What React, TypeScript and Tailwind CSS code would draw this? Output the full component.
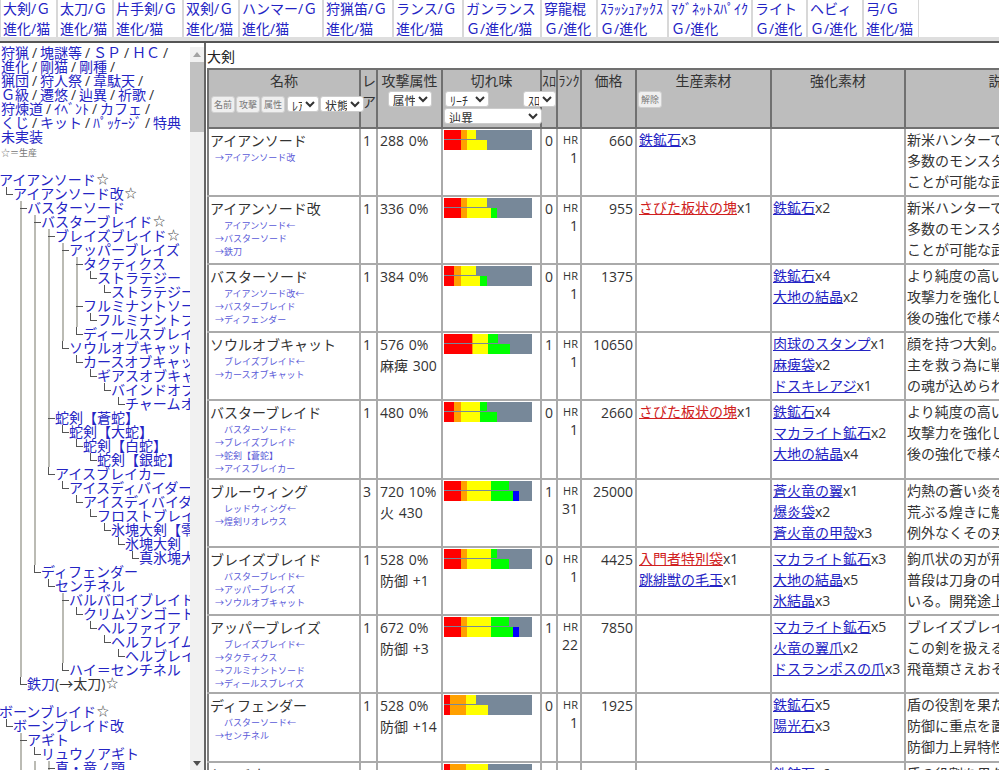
import React from "react";

const navItems: [string, string, number][] = [
  ["大剣/Ｇ", "進化/猫", 57], ["太刀/Ｇ", "進化/猫", 56], ["片手剣/Ｇ", "進化/猫", 70], ["双剣/Ｇ", "進化/猫", 56],
  ["ハンマー/Ｇ", "進化/猫", 84], ["狩猟笛/Ｇ", "進化/猫", 70], ["ランス/Ｇ", "進化/猫", 70], ["ガンランス", "Ｇ/進化/猫", 78],
  ["穿龍棍", "Ｇ/進化", 56], ["ｽﾗｯｼｭｱｯｸｽ", "Ｇ/進化", 71], ["ﾏｸﾞﾈｯﾄｽﾊﾟｲｸ", "Ｇ/進化", 84], ["ライト", "Ｇ/進化", 55],
  ["ヘビィ", "Ｇ/進化", 56], ["弓/Ｇ", "進化/猫", 56],
];

const sideLines: string[][] = [
  ["狩猟", "塊謎等", "ＳＰ", "ＨＣ", ""],
  ["進化", "剛猫", "剛種", ""],
  ["猟団", "狩人祭", "韋駄天", ""],
  ["Ｇ級", "遷悠", "辿異", "祈歌", ""],
  ["狩煉道", "ｲﾍﾞﾝﾄ", "カフェ", ""],
  ["くじ", "キット", "ﾊﾟｯｹｰｼﾞ", "特典"],
  ["未実装"],
];

// level, text, star, guides (levels whose vertical line passes this row)
const tree: [number, string, boolean, number[]][] = [
  [0, "アイアンソード", true, []],
  [1, "アイアンソード改", true, []],
  [2, "バスターソード", false, []],
  [3, "バスターブレイド", true, [2]],
  [4, "ブレイズブレイド", true, [2, 3]],
  [5, "アッパーブレイズ", false, [2, 3, 4]],
  [6, "タクティクス", false, [2, 3, 4, 5]],
  [7, "ストラテジー", false, [2, 3, 4, 5, 6]],
  [8, "ストラテジーアーク", false, [2, 3, 4, 5, 6]],
  [6, "フルミナントソード", false, [2, 3, 4, 5]],
  [7, "フルミナントブレイド", false, [2, 3, 4, 5, 6]],
  [6, "ディールスブレイズ", false, [2, 3, 4, 5]],
  [5, "ソウルオブキャット", false, [2, 3, 4]],
  [6, "カースオブキャット", false, [2, 3, 4]],
  [7, "ギアスオブキャット", false, [2, 3, 4]],
  [8, "バインドオブキャット", false, [2, 3, 4]],
  [9, "チャームオブキャット", false, [2, 3, 4]],
  [4, "蛇剣【蒼蛇】", false, [2, 3]],
  [5, "蛇剣【大蛇】", false, [2, 3, 4]],
  [6, "蛇剣【白蛇】", false, [2, 3, 4]],
  [7, "蛇剣【銀蛇】", false, [2, 3, 4]],
  [4, "アイスブレイカー", false, [2, 3]],
  [5, "アイスディバイダー", false, [2, 3]],
  [6, "アイスディバイダー改", false, [2, 3]],
  [7, "フロストブレイド", false, [2, 3]],
  [8, "氷塊大剣【零】", false, [2, 3]],
  [9, "氷塊大剣【真】", false, [2, 3]],
  [10, "真氷塊大剣", false, [2, 3]],
  [3, "ディフェンダー", false, [2]],
  [4, "センチネル", false, [2]],
  [5, "バルバロイブレイド", false, [2]],
  [6, "クリムゾンゴート", false, [2, 5]],
  [7, "ヘルファイア", false, [2, 5]],
  [8, "ヘルフレイム", false, [2, 5]],
  [9, "ヘルブレイズ", false, [2, 5]],
  [5, "ハイ＝センチネル", false, [2]],
  [2, "鉄刀", true, []],
];

const tree2: [number, string, boolean, number[]][] = [
  [0, "ボーンブレイド", true, []],
  [1, "ボーンブレイド改", false, []],
  [2, "アギト", false, []],
  [3, "リュウノアギト", false, [2]],
  [4, "真・竜ノ顎", false, [2, 3]],
];

const teeLevels = new Set([
  "バスターソード", "バスターブレイド", "ブレイズブレイド", "アッパーブレイズ", "タクティクス", "フルミナントソード",
  "蛇剣【蒼蛇】", "バルバロイブレイド", "アギト", "真・竜ノ顎",
]);

function TreeRow({ row }: { row: [number, string, boolean, number[]] }) {
  const [level, text, star, guides] = row;
  const isIron = text === "鉄刀";
  return (
    <div className="flex h-[14px] leading-[14px] whitespace-nowrap">
      {Array.from({ length: level }).map((_, i) => {
        const l = i + 1;
        const isConn = l === level;
        const pass = guides.includes(l);
        const tee = isConn && teeLevels.has(text);
        return (
          <span key={i} className="relative h-[14px] w-[14px] shrink-0">
            {pass && <span className="absolute bottom-0 left-[7px] top-0 w-[2px] bg-[#bbbbb4]" />}
            {isConn && (
              <>
                <span className={tee ? "absolute bottom-0 left-[7px] top-0 w-[2px] bg-[#bbbbb4]" : "absolute left-[7px] top-0 h-[8px] w-[1px] bg-[#555]"} />
                <span className="absolute left-[7px] top-[7px] h-[1px] w-[7px] bg-[#555]" />
              </>
            )}
          </span>
        );
      })}
      <span className="text-[#2424c4]">{text}</span>
      {isIron && <span className="text-[#333]">(→太刀)</span>}
      {star && <span className="ml-[1px] text-[12px] text-[#444]">☆</span>}
    </div>
  );
}

type Seg = [string, number];
const R = "#ff0000", O = "#ffa000", Y = "#ffff00", G = "#00ff00", B = "#0000ff";
const s = (r: number, o: number, y: number, g = 0, b = 0): Seg[] => [[R, r], [O, o], [Y, y], [G, g], [B, b]];

type Row = {
  h: string; name: string; subs: string[]; rare: string; atk: string; attr?: string;
  sharp: [Seg[], Seg[]]; slot: string; hr: string; price: string;
  make: [string, string, boolean][]; up: [string, string][]; desc: string[];
};

const rows: Row[] = [
  { h: "h-[68px]", name: "アイアンソード", subs: ["→アイアンソード改"], rare: "1", atk: "288 0%", sharp: [s(17, 6, 9), s(17, 6, 20)], slot: "0", hr: "1", price: "660",
    make: [["鉄鉱石", "x3", false]], up: [], desc: ["新米ハンターでも扱える大剣", "多数のモンスターに対して", "ことが可能な武器である"] },
  { h: "h-[68px]", name: "アイアンソード改", subs: ["　アイアンソード←", "→バスターソード", "→鉄刀"], rare: "1", atk: "336 0%", sharp: [s(17, 6, 20), s(17, 6, 24, 6)], slot: "0", hr: "1", price: "955",
    make: [["さびた板状の塊", "x1", true]], up: [["鉄鉱石", "x2"]], desc: ["新米ハンターでも扱える大剣", "多数のモンスターに対して", "ことが可能な武器である"] },
  { h: "h-[68px]", name: "バスターソード", subs: ["　アイアンソード改←", "→バスターブレイド", "→ディフェンダー"], rare: "1", atk: "384 0%", sharp: [s(10, 7, 15), s(10, 7, 19, 7)], slot: "0", hr: "1", price: "1375",
    make: [], up: [["鉄鉱石", "x4"], ["大地の結晶", "x2"]], desc: ["より純度の高い鉱石を用いて", "攻撃力を強化した大剣", "後の強化で様々な派生を"] },
  { h: "h-[68px]", name: "ソウルオブキャット", subs: ["　ブレイズブレイド←", "→カースオブキャット"], rare: "1", atk: "576 0%", attr: "麻痺 300", sharp: [s(28, 1, 15, 10), s(28, 1, 15, 22)], slot: "1", hr: "1", price: "10650",
    make: [], up: [["肉球のスタンプ", "x1"], ["麻痺袋", "x2"], ["ドスキレアジ", "x1"]], desc: ["顔を持つ大剣。", "主を救う為に戦う", "の魂が込められている"] },
  { h: "h-[79px]", name: "バスターブレイド", subs: ["　バスターソード←", "→ブレイズブレイド", "→蛇剣【蒼蛇】", "→アイスブレイカー"], rare: "1", atk: "480 0%", sharp: [s(10, 7, 19, 7), s(10, 7, 19, 17)], slot: "0", hr: "1", price: "2660",
    make: [["さびた板状の塊", "x1", true]], up: [["鉄鉱石", "x4"], ["マカライト鉱石", "x2"], ["大地の結晶", "x4"]], desc: ["より純度の高い鉱石を用いて", "攻撃力を強化した大剣", "後の強化で様々な派生を"] },
  { h: "h-[68px]", name: "ブルーウィング", subs: ["　レッドウィング←", "→煌剣リオレウス"], rare: "3", atk: "720 10%", attr: "火 430", sharp: [s(17, 6, 24, 18), s(17, 6, 24, 22, 6)], slot: "1", hr: "31", price: "25000",
    make: [], up: [["蒼火竜の翼", "x1"], ["爆炎袋", "x2"], ["蒼火竜の甲殻", "x3"]], desc: ["灼熱の蒼い炎を纏う大剣", "荒ぶる煌きに魅せられた者は", "例外なくその刃に倒れる"] },
  { h: "h-[68px]", name: "ブレイズブレイド", subs: ["　バスターブレイド←", "→アッパーブレイズ", "→ソウルオブキャット"], rare: "1", atk: "528 0%", attr: "防御 +1", sharp: [s(17, 6, 24, 6), s(17, 6, 24, 18)], slot: "0", hr: "1", price: "4425",
    make: [["入門者特別袋", "x1", true], ["跳緋獣の毛玉", "x1", false]], up: [["マカライト鉱石", "x3"], ["大地の結晶", "x5"], ["氷結晶", "x3"]], desc: ["鉤爪状の刃が飛び出す大剣", "普段は刀身の中に収められて", "いる。開発途上の武器である"] },
  { h: "h-[78px]", name: "アッパーブレイズ", subs: ["　ブレイズブレイド←", "→タクティクス", "→フルミナントソード", "→ディールスブレイズ"], rare: "1", atk: "672 0%", attr: "防御 +3", sharp: [s(17, 6, 24, 18), s(17, 6, 24, 22, 6)], slot: "1", hr: "22", price: "7850",
    make: [], up: [["マカライト鉱石", "x5"], ["火竜の翼爪", "x2"], ["ドスランポスの爪", "x3"]], desc: ["ブレイズブレイドの強化型", "この剣を扱える者ならば", "飛竜類さえおそれない"] },
  { h: "h-[69px]", name: "ディフェンダー", subs: ["　バスターソード←", "→センチネル"], rare: "1", atk: "528 0%", attr: "防御 +14", sharp: [s(6, 16, 10), s(6, 16, 22)], slot: "0", hr: "1", price: "1925",
    make: [], up: [["鉄鉱石", "x5"], ["陽光石", "x3"]], desc: ["盾の役割を果たす大剣", "防御に重点を置いた設計で", "防御力上昇特性を持つ"] },
  { h: "h-[68px]", name: "センチネル", subs: ["　ディフェンダー←"], rare: "1", atk: "576 0%", sharp: [s(6, 16, 22), s(6, 16, 24)], slot: "1", hr: "1", price: "2825",
    make: [], up: [["鉄鉱石", "x6"]], desc: ["盾の役割を果たす大剣"] },
];

function Btn({ children }: { children: React.ReactNode }) {
  return (
    <button className="h-[17px] w-[24px] shrink-0 rounded-[3px] border border-[#cfcfcf] bg-[#efefef] text-[9px] font-normal leading-[14px] text-[#777]">
      {children}
    </button>
  );
}

function Sel({ label, className }: { label: string; className: string }) {
  return (
    <select defaultValue={label} className={"shrink-0 rounded-[3px] border border-[#ccc] bg-white text-[12px] font-normal leading-[14px] text-[#333] " + className}>
      <option value={label}>{label}</option>
    </select>
  );
}

function Bar({ segs }: { segs: Seg[] }) {
  return (
    <div className="flex h-[10px]">
      {segs.filter((x) => x[1] > 0).map((x, i) => (
        <div key={i} className="h-full" style={{ width: x[1], backgroundColor: x[0] }} />
      ))}
    </div>
  );
}

function ScrollBar() {
  return (
    <div className="relative mt-[4px] flex w-[14px] shrink-0 flex-col bg-[#f1f1f1]">
      <div className="flex h-[15px] items-center justify-center">
        <svg width="8" height="5" viewBox="0 0 8 5"><path d="M4 0 L8 5 L0 5 Z" fill="#a3a3a3" /></svg>
      </div>
      <div className="h-[70px] bg-[#c1c1c1]" />
      <div className="flex-1" />
      <div className="flex h-[9px] items-start justify-center">
        <svg width="8" height="5" viewBox="0 0 8 5"><path d="M0 0 L8 0 L4 5 Z" fill="#505050" /></svg>
      </div>
    </div>
  );
}

const thCls = "border-2 border-[#707070] bg-[#bdbdbd] align-top p-0 font-normal text-center leading-[21px] text-[#333]";
const tdCls = "border-2 border-[#aaaaaa] align-top p-0 text-[#333] leading-[21px] whitespace-nowrap";

export default function App() {
  return (
    <div className="flex h-[770px] w-[999px] flex-col overflow-hidden bg-white text-[14px] text-[#333] [word-spacing:1px] font-['Open_Sans','Noto_Sans_CJK_JP',sans-serif]">
      <div className="shrink-0 border-b-2 border-[#555]">
        <div className="flex h-[37px]">
          {navItems.map(([a, b, w], i) => (
            <div key={i} style={{ width: w }} className="h-[37px] shrink-0 border-x border-[#d8d8d8] bg-white pl-[2px] leading-[21px] whitespace-nowrap text-[#2424c4]">
              <div className="-mt-[2px]">{a}</div>
              <div className="-mt-[1px]">{b}</div>
            </div>
          ))}
        </div>
        <div className="h-[4px] bg-[#dedede]" />
      </div>

      <div className="flex min-h-0 flex-1">
        <div className="flex w-[206px] shrink-0 border-r-2 border-[#666]">
          <div className="w-[190px] shrink-0 overflow-hidden">
            <div className="pl-[1px] pt-[3px] leading-[14px] whitespace-nowrap">
              {sideLines.map((ln, i) => (
                <div key={i} className="h-[14px]">
                  {ln.map((t, j) => (
                    <React.Fragment key={j}>
                      {t && <a className="text-[#2424c4]">{t}</a>}
                      {j < ln.length - 1 && <span className="inline-block w-[11px] text-center text-[#333]">/</span>}
                    </React.Fragment>
                  ))}
                </div>
              ))}
              <div className="mt-[2px] h-[14px] text-[9px] text-[#777]">☆＝生産</div>
            </div>
            <div className="-ml-[1px] mt-[13px]">
              {tree.map((r, i) => <TreeRow key={i} row={r} />)}
              <div className="h-[14px]" />
              {tree2.map((r, i) => <TreeRow key={i} row={r} />)}
            </div>
          </div>
          <ScrollBar />
        </div>

        <div className="min-w-0 flex-1 overflow-hidden">
          <div className="h-[25px] pl-[1px] pt-[3px] leading-[21px] text-[#222]">大剣</div>
          <table className="ml-[1px] w-[892px] table-fixed border-collapse">
            <colgroup>
              <col className="w-[152px]" /><col className="w-[17px]" /><col className="w-[65px]" /><col className="w-[99px]" />
              <col className="w-[16px]" /><col className="w-[24px]" /><col className="w-[55px]" /><col className="w-[135px]" />
              <col className="w-[134px]" /><col className="w-[195px]" />
            </colgroup>
            <thead>
              <tr className="h-[59px]">
                <th className={thCls}>
                  <div>名称</div>
                  <div className="ml-[2px] mt-[5px] flex w-[160px] gap-[1px]">
                    <Btn>名前</Btn><Btn>攻撃</Btn><Btn>属性</Btn>
                    <Sel label="ﾚｱ" className="ml-[1px] h-[16px] w-[32px]" />
                    <Sel label="状態" className="h-[16px] w-[44px]" />
                  </div>
                </th>
                <th className={thCls}>
                  <div className="w-[16px]">レア</div>
                </th>
                <th className={thCls}>
                  <div>攻撃属性</div>
                  <div className="flex justify-center"><Sel label="属性" className="h-[16px] w-[44px]" /></div>
                </th>
                <th className={thCls}>
                  <div>切れ味</div>
                  <div className="ml-[2px] flex w-[111px] justify-between">
                    <Sel label="ﾘｰﾁ" className="h-[16px] w-[44px]" />
                    <Sel label="ｽﾛ" className="h-[16px] w-[33px]" />
                  </div>
                  <div className="ml-[1px] mt-[1px] flex"><Sel label="辿異" className="h-[16px] w-[98px] text-left" /></div>
                </th>
                <th className={thCls}><div className="whitespace-nowrap">ｽﾛ</div></th>
                <th className={thCls}><div className="whitespace-nowrap">ﾗﾝｸ</div></th>
                <th className={thCls}><div>価格</div></th>
                <th className={thCls}>
                  <div>生産素材</div>
                  <div className="ml-[1px] flex"><Btn>解除</Btn></div>
                </th>
                <th className={thCls}><div>強化素材</div></th>
                <th className={thCls}><div>説明</div></th>
              </tr>
            </thead>
            <tbody>
              {rows.map((r, i) => (
                <tr key={i} className={r.h}>
                  <td className={tdCls + " border-l-[#808080] pl-[1px] pt-[1px]"}>
                    <div>{r.name}</div>
                    <div className="pl-[5px] text-[9px] leading-[13px] text-[#5a5ad8]">
                      {r.subs.map((x, j) => <div key={j}>{x}</div>)}
                    </div>
                  </td>
                  <td className={tdCls + " pl-[2px] pt-[1px]"}>{r.rare}</td>
                  <td className={tdCls + " pl-[2px] pt-[1px]"}>
                    <div>{r.atk}</div>
                    {r.attr && <div>{r.attr}</div>}
                  </td>
                  <td className={tdCls + " pl-[1px] pt-[1px]"}>
                    <div className="w-[88px] bg-[#778899]">
                      <div className="h-[9px] overflow-hidden"><Bar segs={r.sharp[0]} /></div>
                      <div className="mt-[1px]"><Bar segs={r.sharp[1]} /></div>
                    </div>
                  </td>
                  <td className={tdCls + " pt-[1px] text-center"}>{r.slot}</td>
                  <td className={tdCls + " pr-[2px] text-right"}>
                    <div className="text-[11px]">HR</div>
                    <div className="leading-[16px]">{r.hr}</div>
                  </td>
                  <td className={tdCls + " pr-[2px] pt-[1px] text-right"}>{r.price}</td>
                  <td className={tdCls + " pl-[2px]"}>
                    {r.make.map(([n, q, red], j) => (
                      <div key={j}>
                        <a className={red ? "text-[#d02020] underline" : "text-[#2424c4] underline"}>{n}</a>{q}
                      </div>
                    ))}
                  </td>
                  <td className={tdCls + " pl-[1px]"}>
                    {r.up.map(([n, q], j) => (
                      <div key={j}><a className="text-[#2424c4] underline">{n}</a>{q}</div>
                    ))}
                  </td>
                  <td className={tdCls + " pl-[1px]"}>
                    {r.desc.map((d, j) => <div key={j}>{d}</div>)}
                  </td>
                </tr>
              ))}
            </tbody>
          </table>
        </div>
      </div>
    </div>
  );
}
